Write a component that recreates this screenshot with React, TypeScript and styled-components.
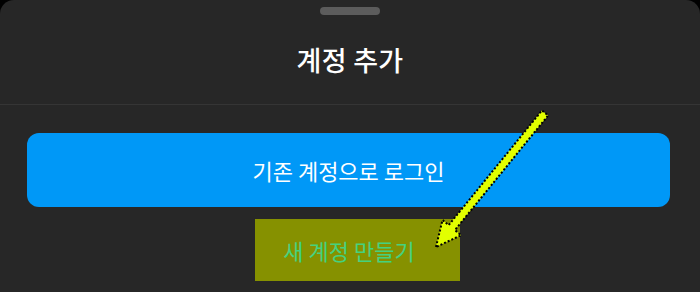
import React from 'react';
import styled, { createGlobalStyle } from 'styled-components';

const Global = createGlobalStyle`
  html, body {
    margin: 0;
    padding: 0;
    background: #000;
  }
  body {
    font-family: "Noto Sans CJK KR", "Noto Sans", sans-serif;
  }
`;

const Sheet = styled.div`
  position: relative;
  width: 700px;
  height: 292px;
  background: #272727;
  border-radius: 14px 14px 0 0;
  display: flex;
  flex-direction: column;
  overflow: hidden;
`;

const HandleRow = styled.div`
  display: flex;
  justify-content: center;
  padding-top: 7px;
`;

const Handle = styled.div`
  width: 60px;
  height: 8px;
  border-radius: 4px;
  background: #5c5c5c;
`;

const Header = styled.div`
  height: 89px;
  display: flex;
  align-items: center;
  justify-content: center;
  border-bottom: 1px solid #353535;
`;

const Title = styled.h1`
  margin: 0;
  font-size: 27px;
  font-weight: 500;
  color: #fff;
  letter-spacing: 0.3px;
`;

const Body = styled.div`
  display: flex;
  flex-direction: column;
  align-items: center;
  padding: 28px 30px 0 27px;
  gap: 12px;
`;

const PrimaryButton = styled.button`
  width: 100%;
  height: 74px;
  border: none;
  border-radius: 12px;
  background: #0098f7;
  color: #fff;
  font-family: inherit;
  font-size: 22px;
  font-weight: 400;
  cursor: pointer;
`;

const LinkButton = styled.button`
  height: 62px;
  width: 205px;
  margin-left: 18px;
  padding: 0 17px 0 0;
  border: none;
  background: #869100;
  color: #45d17f;
  font-family: inherit;
  font-size: 22px;
  font-weight: 400;
  cursor: pointer;
`;

const Overlay = styled.svg`
  position: absolute;
  left: 0;
  top: 0;
  pointer-events: none;
`;

const Arrow = () => (
  <Overlay width="700" height="292" viewBox="0 0 700 292">
    <polygon
      points="436,247 442.5,220 448.7,225.1 541.9,110.5 548.1,115.5 454.9,230.1 461.1,235.2"
      fill="#e2ff00"
      stroke="#000"
      strokeWidth="2"
      strokeDasharray="2 2"
      strokeLinejoin="round"
    />
  </Overlay>
);

export default function App() {
  return (
    <>
      <Global />
      <Sheet>
        <HandleRow>
          <Handle />
        </HandleRow>
        <Header>
          <Title>계정 추가</Title>
        </Header>
        <Body>
          <PrimaryButton>기존 계정으로 로그인</PrimaryButton>
          <LinkButton>새 계정 만들기</LinkButton>
        </Body>
        <Arrow />
      </Sheet>
    </>
  );
}
